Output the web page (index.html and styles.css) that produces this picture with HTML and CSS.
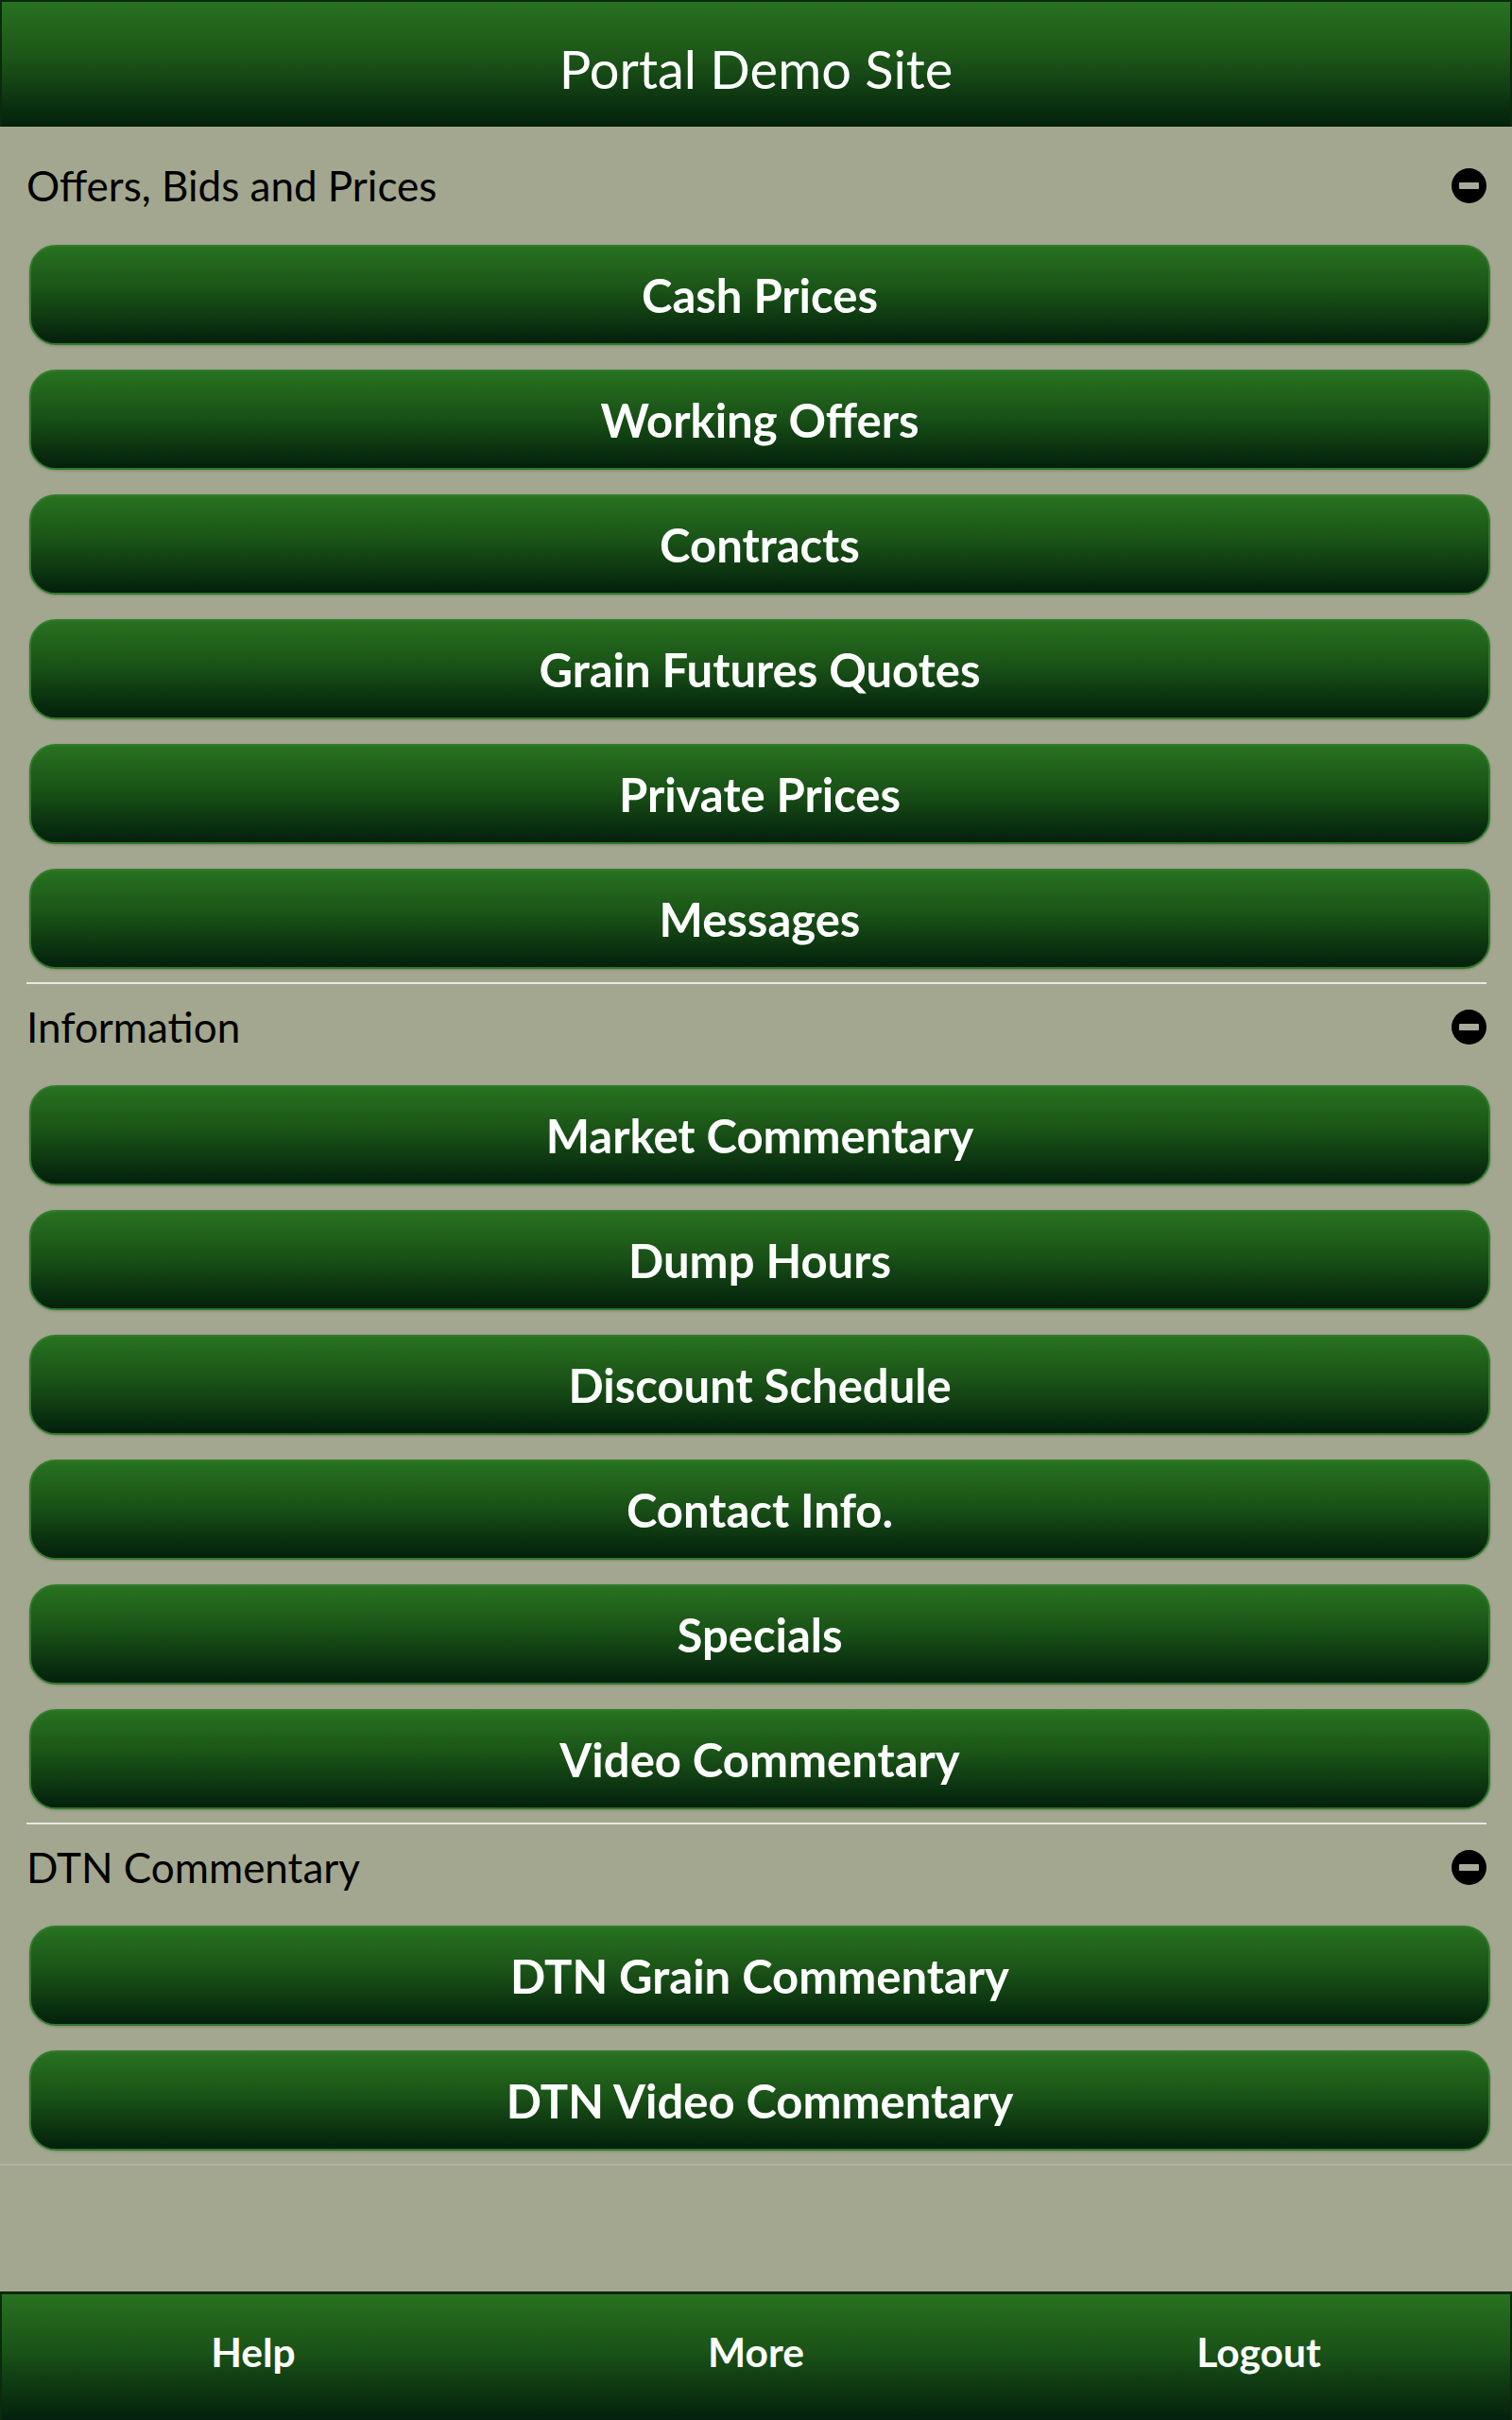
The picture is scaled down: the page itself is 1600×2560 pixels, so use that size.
FILE: index.html
```html
<!DOCTYPE html>
<html>
<head>
<meta charset="utf-8">
<link rel="stylesheet" href="styles.css">
</head>
<body>
<div class="page">
  <header class="topbar"><h1 class="title">Portal Demo Site</h1></header>
  <main class="content">
    <section class="group">
      <div class="group-head"><span class="group-title">Offers, Bids and Prices</span><span class="minus"></span></div>
      <div class="buttons">
        <a class="btn">Cash Prices</a>
        <a class="btn">Working Offers</a>
        <a class="btn">Contracts</a>
        <a class="btn">Grain Futures Quotes</a>
        <a class="btn">Private Prices</a>
        <a class="btn">Messages</a>
      </div>
    </section>
    <section class="group">
      <div class="group-head"><span class="group-title">Information</span><span class="minus"></span></div>
      <div class="buttons">
        <a class="btn">Market Commentary</a>
        <a class="btn">Dump Hours</a>
        <a class="btn">Discount Schedule</a>
        <a class="btn">Contact Info.</a>
        <a class="btn">Specials</a>
        <a class="btn">Video Commentary</a>
      </div>
    </section>
    <section class="group last">
      <div class="group-head"><span class="group-title">DTN Commentary</span><span class="minus"></span></div>
      <div class="buttons">
        <a class="btn">DTN Grain Commentary</a>
        <a class="btn">DTN Video Commentary</a>
      </div>
    </section>
    <div class="end-line"></div>
  </main>
  <footer class="navbar">
    <a class="nav-item">Help</a>
    <a class="nav-item">More</a>
    <a class="nav-item">Logout</a>
  </footer>
</div>
</body>
</html>
```

FILE: styles.css
```css
html, body {
  margin: 0;
  padding: 0;
}
body {
  background: #a3a78f;
  font-family: Lato, "Open Sans", sans-serif;
}
.page {
  width: 1600px;
  height: 2560px;
  display: flex;
  flex-direction: column;
}
.topbar {
  height: 134px;
  box-sizing: border-box;
  border: 2px solid #0b2a0d;
  border-bottom: none;
  background: linear-gradient(#287220, #1c5518 45%, #03200c);
  display: flex;
  align-items: center;
  justify-content: center;
  padding-top: 10px;
}
.title {
  margin: 0;
  font-weight: 400;
  font-size: 56px;
  color: #fff;
  line-height: 1;
}
.content {
  flex: 1;
  padding-top: 17px;
}
.group {
  margin: 0 27px 0 28px;
  border-bottom: 2px solid #e6e8e0;
  padding-bottom: 14px;
}
.group.last {
  border-bottom: none;
  padding-bottom: 0;
}
.group-head {
  height: 92px;
  box-sizing: border-box;
  padding-bottom: 2px;
  margin-bottom: 16px;
  display: flex;
  align-items: center;
  justify-content: space-between;
}
.group + .group .group-head {
  margin-bottom: 15px;
}
.group-title {
  font-size: 44px;
  color: #000;
  line-height: 1;
}
.minus {
  width: 37px;
  height: 37px;
  border-radius: 50%;
  background: #000;
  position: relative;
}
.minus::after {
  content: "";
  position: absolute;
  left: 8px;
  top: 15px;
  width: 21px;
  height: 7px;
  background: #a9ac98;
  border-radius: 1px;
}
.buttons {
  display: flex;
  flex-direction: column;
  gap: 26px;
  margin: 0 -4px 0 3px;
}
.btn {
  display: flex;
  align-items: center;
  justify-content: center;
  height: 106px;
  box-sizing: border-box;
  border: 2px solid #2f7b2b;
  border-radius: 28px;
  background: linear-gradient(#287220, #1a5317 45%, #03200c);
  box-shadow: 0 1px 3px rgba(0, 0, 0, 0.2);
  color: #fff;
  font-weight: 700;
  font-size: 49px;
  line-height: 1;
}
.end-line {
  margin-top: 14px;
  height: 2px;
  background: #b1b59f;
}
.navbar {
  height: 136px;
  box-sizing: border-box;
  border: 2px solid #0b2a0d;
  border-top: 3px solid #0b2a0d;
  border-bottom: none;
  background: linear-gradient(#287220, #1a5317 45%, #03200c);
  display: grid;
  grid-template-columns: 1fr 1fr 1fr;
  align-items: center;
  padding-bottom: 10px;
}
.nav-item {
  text-align: center;
  color: #fff;
  font-weight: 700;
  font-size: 42.5px;
  line-height: 1;
}
```
